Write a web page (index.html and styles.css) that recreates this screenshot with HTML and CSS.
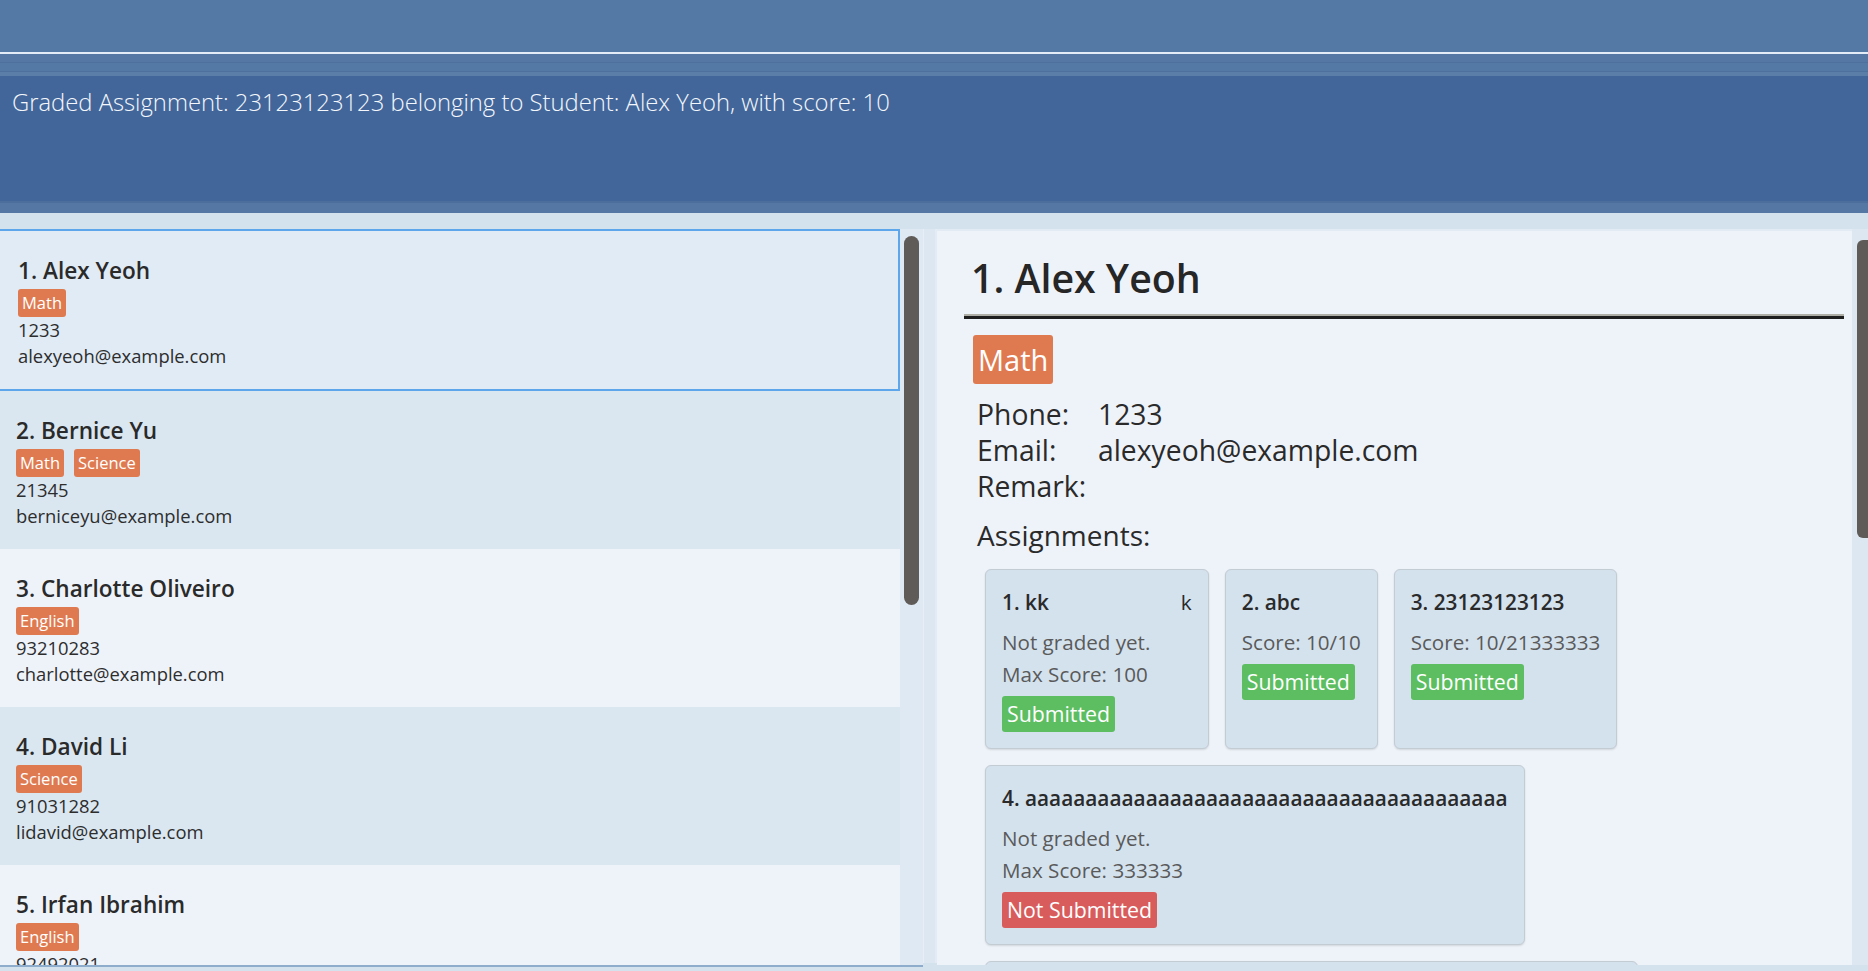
FILE: index.html
```html
<!DOCTYPE html>
<html>
<head>
<meta charset="utf-8">
<link rel="stylesheet" href="styles.css">
</head>
<body>
<div class="app">
  <div class="menubar"></div>
  <div class="cmd">
    <div class="band b1"></div>
    <div class="band b2"></div>
    <div class="band b3"></div>
  </div>
  <div class="result">Graded Assignment: 23123123123 belonging to Student: Alex Yeoh, with score: 10</div>
  <div class="result-foot"></div>
  <div class="main">
    <div class="list-pane">
      <div class="list">
        <div class="item odd selected">
          <div class="name">1. Alex Yeoh</div>
          <div class="tags"><span class="tag">Math</span></div>
          <div class="line">1233</div>
          <div class="line">alexyeoh@example.com</div>
        </div>
        <div class="item even">
          <div class="name">2. Bernice Yu</div>
          <div class="tags"><span class="tag">Math</span><span class="tag">Science</span></div>
          <div class="line">21345</div>
          <div class="line">berniceyu@example.com</div>
        </div>
        <div class="item odd">
          <div class="name">3. Charlotte Oliveiro</div>
          <div class="tags"><span class="tag">English</span></div>
          <div class="line">93210283</div>
          <div class="line">charlotte@example.com</div>
        </div>
        <div class="item even">
          <div class="name">4. David Li</div>
          <div class="tags"><span class="tag">Science</span></div>
          <div class="line">91031282</div>
          <div class="line">lidavid@example.com</div>
        </div>
        <div class="item odd">
          <div class="name">5. Irfan Ibrahim</div>
          <div class="tags"><span class="tag">English</span></div>
          <div class="line">92492021</div>
          <div class="line">irfan@example.com</div>
        </div>
      </div>
      <div class="vscroll"><div class="thumb"></div></div>
    </div>
    <div class="split"></div>
    <div class="detail-pane">
      <div class="detail">
        <div class="d-name">1. Alex Yeoh</div>
        <div class="d-rule"></div>
        <div class="d-tags"><span class="d-tag">Math</span></div>
        <div class="d-rows">
          <div class="d-label">Phone:</div><div class="d-value">1233</div>
          <div class="d-label">Email:</div><div class="d-value">alexyeoh@example.com</div>
          <div class="d-label">Remark:</div><div class="d-value"></div>
        </div>
        <div class="d-assign">Assignments:</div>
        <div class="cards">
          <div class="card">
            <div class="c-title"><span>1. kk</span><span class="c-desc">k</span></div>
            <div class="c-text">Not graded yet.</div>
            <div class="c-text">Max Score: 100</div>
            <div><span class="badge ok">Submitted</span></div>
          </div>
          <div class="card">
            <div class="c-title"><span>2. abc</span></div>
            <div class="c-text">Score: 10/10</div>
            <div><span class="badge ok">Submitted</span></div>
          </div>
          <div class="card">
            <div class="c-title"><span>3. 23123123123</span></div>
            <div class="c-text">Score: 10/21333333</div>
            <div><span class="badge ok">Submitted</span></div>
          </div>
          <div class="card">
            <div class="c-title"><span>4. aaaaaaaaaaaaaaaaaaaaaaaaaaaaaaaaaaaaaaaa</span></div>
            <div class="c-text">Not graded yet.</div>
            <div class="c-text">Max Score: 333333</div>
            <div><span class="badge bad">Not Submitted</span></div>
          </div>
          <div class="card">
            <div class="c-title"><span>5. bbbbbbbbbbbbbbbbbbbbbbbbbbbbbbbbbbbbbbbbbbbbbb</span></div>
            <div class="c-text">Not graded yet.</div>
            <div class="c-text">Max Score: 100</div>
            <div><span class="badge bad">Not Submitted</span></div>
          </div>
        </div>
      </div>
      <div class="vscroll2"><div class="thumb2"></div></div>
    </div>
  </div>
</div>
</body>
</html>
```
FILE: styles.css
```css
* { box-sizing: border-box; }
html, body {
  margin: 0;
  padding: 0;
  width: 1868px;
  height: 971px;
  overflow: hidden;
  background: #d4e2ee;
  font-family: "Open Sans", "Noto Sans", sans-serif;
  color: #2d2d2d;
}
.app {
  display: flex;
  flex-direction: column;
  height: 971px;
}
.menubar {
  height: 54px;
  background: #5579a5;
  border-bottom: 2px solid #e4edf7;
  flex: none;
}
.cmd {
  height: 22px;
  flex: none;
  display: flex;
  flex-direction: column;
}
.band { flex: none; }
.b1 { height: 9px; background: #5478a3; border-bottom: 1px solid #4d709c; }
.b2 { height: 9px; background: #5579a5; border-bottom: 1px solid #4d709c; }
.b3 { height: 4px; background: #5a7ea8; }
.result {
  height: 125px;
  flex: none;
  background: #42669a;
  color: #f4f7fb;
  font-weight: 300;
  font-size: 23.8px;
  padding: 10px 12px;
  white-space: nowrap;
}
.result-foot {
  height: 12px;
  flex: none;
  background: #5477a3;
  border-top: 2px solid #4b6e9c;
}
.main {
  flex: 1;
  display: flex;
  padding: 16px 0 4px;
  background: #d4e2ee;
  min-height: 0;
}
.list-pane {
  width: 923px;
  flex: none;
  display: flex;
  border-bottom: 2px solid #8eaccb;
  overflow: hidden;
}
.list {
  width: 900px;
  flex: none;
  overflow: hidden;
}
.item {
  padding: 24px 16px 20px;
}
.item.odd { background: #eef3fa; }
.item.even { background: #dae7f1; }
.item.selected {
  background: #e0ebf5;
  border: 2px solid #5ea6ec;
  border-left-width: 0;
  padding-left: 18px;
}
.name {
  font-weight: 600;
  font-size: 22.6px;
  line-height: 31px;
  color: #2a2a2a;
  white-space: nowrap;
}
.tags {
  margin-top: 3px;
  display: flex;
  gap: 10px;
  height: 28px;
}
.tag {
  background: #df7a50;
  color: #fff;
  font-size: 16.5px;
  line-height: 22px;
  padding: 3px 4px;
  border-radius: 3px;
}
.line {
  font-size: 18.4px;
  line-height: 26px;
  white-space: nowrap;
}
.vscroll {
  width: 23px;
  flex: none;
  background: #dfe9f3;
  padding: 7px 4px 0;
}
.thumb {
  width: 15px;
  height: 369px;
  border-radius: 8px;
  background: #5f5b58;
}
.split {
  width: 14px;
  flex: none;
  background: #dce7f1;
  border-left: 1px solid #e6eef6;
  border-right: 2px solid #e3ebf4;
  margin-bottom: 4px;
}
.detail-pane {
  flex: 1;
  display: flex;
  min-width: 0;
  margin-bottom: 2px;
}
.detail {
  flex: 1;
  background: #eef3fa;
  border-top: 2px solid #e2eaf3;
  padding: 21px 8px 0 27px;
  overflow: hidden;
  min-width: 0;
}
.d-name {
  font-weight: 600;
  font-size: 39.3px;
  line-height: 53px;
  padding-left: 7px;
  color: #262626;
}
.d-rule {
  margin-top: 9px;
  border-top: 2px solid #aeaea6;
  border-bottom: 3px solid #1e1e1e;
}
.d-tags {
  margin-top: 16px;
  padding-left: 9px;
  display: flex;
}
.d-tag {
  background: #df7a50;
  color: #fff;
  font-size: 29px;
  line-height: 41px;
  padding: 4px 5px;
  border-radius: 3px;
}
.d-rows {
  margin-top: 12px;
  padding-left: 13px;
  display: grid;
  grid-template-columns: 121px 1fr;
  font-size: 28.3px;
  line-height: 36px;
  color: #2a2a2a;
}
.d-assign {
  margin-top: 13px;
  padding-left: 13px;
  font-size: 28px;
  line-height: 36px;
  color: #2a2a2a;
}
.cards {
  margin-top: 16px;
  padding-left: 21px;
  display: flex;
  flex-wrap: wrap;
  align-items: stretch;
  gap: 16px;
  max-width: 900px;
}
.card {
  background: #d4e2ee;
  border: 1px solid #c3cbd3;
  border-radius: 6px;
  box-shadow: 0 1px 2px rgba(0,0,0,0.12);
  padding: 18px 16px 16px;
}
.c-title {
  display: flex;
  justify-content: space-between;
  font-weight: 600;
  font-size: 20.8px;
  line-height: 28px;
  color: #2a2a2a;
  white-space: nowrap;
  margin-bottom: 10px;
}
.c-desc { margin-left: 132px; font-weight: 500; }
.c-text {
  font-size: 20.6px;
  line-height: 32px;
  color: #5a5a5a;
  white-space: nowrap;
}
.badge {
  display: inline-block;
  margin-top: 6px;
  color: #fff;
  font-size: 21.3px;
  line-height: 30px;
  padding: 3px 5px;
  border-radius: 3px;
}
.badge.ok { background: #5cbe60; }
.badge.bad { background: #d95c5c; }
.vscroll2 {
  width: 16px;
  flex: none;
  background: #dce7f1;
  padding: 11px 0 0 5px;
}
.thumb2 {
  width: 11px;
  height: 298px;
  background: #5f5b58;
  border-radius: 6px 0 0 6px;
}
```
